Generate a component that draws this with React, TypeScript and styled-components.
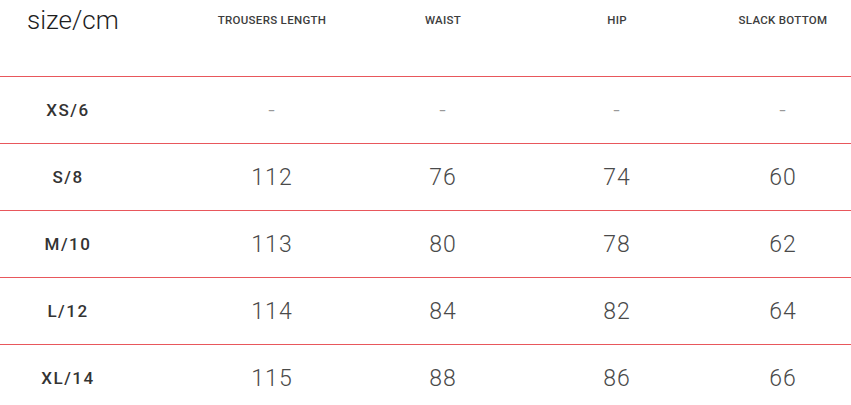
import React from "react";
import styled, { createGlobalStyle } from "styled-components";

interface ISizeRow {
    label: string,
    values: string[]
}

const columns: string[] = ['TROUSERS LENGTH', 'WAIST', 'HIP', 'SLACK BOTTOM'];

const rows: ISizeRow[] = [
    { label: 'XS/6', values: ['-', '-', '-', '-'] },
    { label: 'S/8', values: ['112', '76', '74', '60'] },
    { label: 'M/10', values: ['113', '80', '78', '62'] },
    { label: 'L/12', values: ['114', '84', '82', '64'] },
    { label: 'XL/14', values: ['115', '88', '86', '66'] },
];

const App: React.FC = () => {
    return (
        <>
            <GlobalStyle />
            <Table>
                <HeaderRow>
                    <TitleCell>size/cm</TitleCell>
                    {columns.map((c) => (
                        <HeadCell key={c}>{c}</HeadCell>
                    ))}
                </HeaderRow>
                {rows.map((r) => (
                    <Row key={r.label}>
                        <LabelCell>{r.label}</LabelCell>
                        {r.values.map((v, i) => (
                            <ValueCell key={i} $dash={v === '-'}>{v}</ValueCell>
                        ))}
                    </Row>
                ))}
            </Table>
        </>
    )
}

const GlobalStyle = createGlobalStyle`
    body {
        margin: 0;
        background: #fff;
        font-family: Roboto, "Liberation Sans", sans-serif;
    }
`;

const Table = styled.div`
    width: 851px;
    height: 405px;
    overflow: hidden;
`;

const grid = `
    display: grid;
    grid-template-columns: 136px 272px 70px 278px 54px;
`;

const HeaderRow = styled.div`
    ${grid}
    height: 76px;
`;

const Row = styled.div`
    ${grid}
    height: 66px;
    border-top: 1px solid #e8575c;
    align-items: center;
`;

const Cell = styled.div`
    display: flex;
    justify-content: center;
    white-space: nowrap;
`;

const TitleCell = styled.div`
    padding: 5px 0 0 27px;
    font-size: 26px;
    font-weight: 300;
    color: #1e1e1e;
    white-space: nowrap;
`;

const HeadCell = styled(Cell)`
    padding-top: 13px;
    font-size: 11.5px;
    font-weight: 500;
    color: #3d3d3d;
    letter-spacing: 0.3px;
`;

const LabelCell = styled(Cell)`
    font-size: 17px;
    font-weight: 500;
    color: #333;
    letter-spacing: 1.5px;
`;

const ValueCell = styled(Cell)<{ $dash: boolean }>`
    font-size: 23px;
    font-weight: 300;
    color: ${(p) => (p.$dash ? '#999' : '#4a4a4a')};
    letter-spacing: 1px;
`;

export default App
